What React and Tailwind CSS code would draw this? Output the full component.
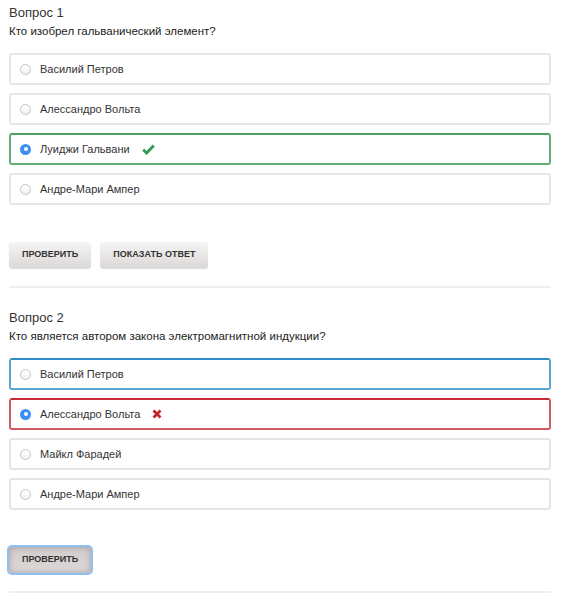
import { useState } from "react";

const questions = [
  {
    id: 1,
    title: "Вопрос 1",
    text: "Кто изобрел гальванический элемент?",
    options: [
      { label: "Василий Петров", state: "idle" },
      { label: "Алессандро Вольта", state: "idle" },
      { label: "Луиджи Гальвани", state: "correct", checked: true },
      { label: "Андре-Мари Ампер", state: "idle" },
    ],
    showAnswer: true,
    focused: false,
  },
  {
    id: 2,
    title: "Вопрос 2",
    text: "Кто является автором закона электромагнитной индукции?",
    options: [
      { label: "Василий Петров", state: "hover" },
      { label: "Алессандро Вольта", state: "wrong", checked: true },
      { label: "Майкл Фарадей", state: "idle" },
      { label: "Андре-Мари Ампер", state: "idle" },
    ],
    showAnswer: false,
    focused: true,
  },
];

const borderByState = {
  idle: "border-[#e6e6e6]",
  correct: "border-[#5fae78] border-t-[#4d9e67]",
  wrong: "border-[#cf5a62] border-t-[#c52a35]",
  hover: "border-[#5aa6d3] border-t-[#2f8cc4]",
};

function Radio({ checked }) {
  if (checked) {
    return (
      <span className="flex h-[11px] w-[11px] items-center justify-center rounded-full bg-[#3d8ef2]">
        <span className="h-[4px] w-[4px] rounded-full bg-white" />
      </span>
    );
  }
  return (
    <span className="h-[11px] w-[11px] rounded-full border border-[#c4c4c4] bg-gradient-to-b from-white to-[#f0f0f0]" />
  );
}

function Option({ option }) {
  return (
    <div
      className={`flex h-[32px] items-center rounded-[3px] border-2 bg-white pl-[9px] ${borderByState[option.state]}`}
    >
      <Radio checked={option.checked} />
      <span className="ml-[9px] text-[11px] text-[#333]">{option.label}</span>
      {option.state === "correct" && (
        <svg className="ml-[12px] h-[11px] w-[13px]" viewBox="0 0 13 11">
          <path d="M1.2 5.8 L4.6 9 L11.8 1.6" fill="none" stroke="#2f9a4f" strokeWidth="2.8" />
        </svg>
      )}
      {option.state === "wrong" && (
        <svg className="ml-[12px] h-[10px] w-[10px]" viewBox="0 0 10 10">
          <path d="M1.5 1.5 L8.5 8.5 M8.5 1.5 L1.5 8.5" fill="none" stroke="#c3242d" strokeWidth="2.8" />
        </svg>
      )}
    </div>
  );
}

function QuizButton({ children, focused }) {
  return (
    <button
      className={`h-[26px] rounded-[3px] px-[13px] text-[9px] font-bold uppercase text-[#333] ${
        focused
          ? "bg-gradient-to-b from-[#d3cccc] to-[#ddd7d7] shadow-[inset_0_0_6px_rgba(0,0,0,0.25),0_0_0_2px_#8ec0f5]"
          : "bg-gradient-to-b from-[#f6f4f4] to-[#dcd8d8] shadow-[0_1px_1px_rgba(0,0,0,0.15)]"
      }`}
    >
      {children}
    </button>
  );
}

function Question({ q }) {
  return (
    <div className="pt-[5px]">
      <div className="text-[13px] leading-[16px] text-[#333]">{q.title}</div>
      <div className="mt-[3px] text-[11.5px] leading-[14px] text-[#222]">{q.text}</div>
      <div className="mt-[15px] flex flex-col gap-[8px]">
        {q.options.map((o) => (
          <Option key={o.label} option={o} />
        ))}
      </div>
      <div className="mt-[37px] flex gap-[9px]">
        <QuizButton focused={q.focused}>Проверить</QuizButton>
        {q.showAnswer && <QuizButton>Показать ответ</QuizButton>}
      </div>
      <div className="mt-[18px] h-[2px] bg-[#eeeeee]" />
    </div>
  );
}

export default function App() {
  const [items] = useState(questions);
  return (
    <div className="min-h-[600px] bg-white px-[9px] pr-[17px] font-['Liberation_Sans',Arial,sans-serif]">
      <div className="flex flex-col gap-[17px]">
        {items.map((q) => (
          <Question key={q.id} q={q} />
        ))}
      </div>
    </div>
  );
}
